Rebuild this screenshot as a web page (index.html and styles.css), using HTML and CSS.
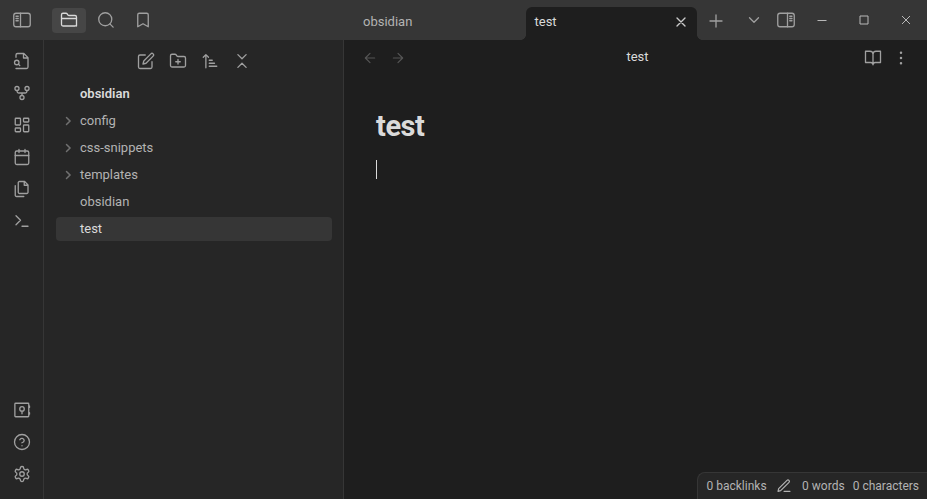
FILE: index.html
```html
<!DOCTYPE html>
<html lang="en">
<head>
<meta charset="utf-8">
<title>test - obsidian</title>
<link rel="stylesheet" href="styles.css">
</head>
<body>
<div class="app">
  <header class="titlebar">
    <div class="toggle-left"><svg class="icon" viewBox="0 0 24 24"><rect x="1" y="3" width="22" height="18" rx="3"/><path d="M10 3v18M4 7h3M4 10h3M4 13h3"/></svg></div>
    <div class="side-tabs">
      <div class="side-tab active"><svg class="icon" viewBox="0 0 24 24"><path d="M22 20V8a2 2 0 0 0-2-2h-7.900a2 2 0 0 1-1.700-.9l-.8-1.200A2 2 0 0 0 7.900 3H4a2 2 0 0 0-2 2v13a2 2 0 0 0 2 2h16a2 2 0 0 0 2-2M2 10h20"/></svg></div>
      <div class="side-tab"><svg class="icon" viewBox="0 0 24 24"><circle cx="11" cy="11" r="8.700"/><path d="m21.500 21.500-4.300-4.300"/></svg></div>
      <div class="side-tab"><svg class="icon" viewBox="0 0 24 24"><path d="m19 21-7-4-7 4V5a2 2 0 0 1 2-2h10a2 2 0 0 1 2 2v16z"/></svg></div>
    </div>
    <div class="tab"><span>obsidian</span></div>
    <div class="tab current"><span>test</span><svg class="icon close" viewBox="0 0 24 24"><path d="M18 6 6 18M6 6l12 12"/></svg></div>
    <div class="new-tab"><svg class="icon" viewBox="0 0 24 24"><path d="M12 4v16M4 12h16"/></svg></div>
    <div class="tab-list"><svg class="icon" viewBox="0 0 24 24"><path d="m6 9 6 6 6-6"/></svg></div>
    <div class="toggle-right"><svg class="icon" viewBox="0 0 24 24"><rect x="1" y="3" width="22" height="18" rx="3"/><path d="M14 3v18M17 7h3M17 10h3M17 13h3"/></svg></div>
    <div class="window-buttons">
      <svg viewBox="0 0 10 10"><path d="M.5 5.500h9"/></svg>
      <svg viewBox="0 0 10 10"><path d="M1 1h8v8H1z"/></svg>
      <svg viewBox="0 0 10 10"><path d="m1 1 8 8M9 1 1 9"/></svg>
    </div>
  </header>

  <div class="workspace">
    <nav class="ribbon">
      <svg class="icon" viewBox="0 0 24 24"><path d="M4 22h14a2 2 0 0 0 2-2V7.500L14.500 2H6a2 2 0 0 0-2 2v3M14 2v6h6"/><circle cx="5" cy="14" r="3"/><path d="m9 18-1.500-1.500"/></svg>
      <svg class="icon" viewBox="0 0 24 24"><circle cx="12" cy="18" r="2.700"/><circle cx="5.300" cy="6" r="2.700"/><circle cx="18.700" cy="6" r="2.700"/><path d="M18.500 9v1a2 2 0 0 1-2 2h-9a2 2 0 0 1-2-2V9M12 12v3"/></svg>
      <svg class="icon" viewBox="0 0 24 24"><rect x="3" y="3" width="7" height="9" rx="1"/><rect x="14" y="3" width="7" height="5" rx="1"/><rect x="14" y="12" width="7" height="9" rx="1"/><rect x="3" y="16" width="7" height="5" rx="1"/></svg>
      <svg class="icon" viewBox="0 0 24 24"><rect x="3" y="4" width="18" height="18" rx="2"/><path d="M16 2v4M8 2v4M3 10h18"/></svg>
      <svg class="icon" viewBox="0 0 24 24"><path d="M15.500 2H8.600c-.4 0-.8.2-1.100.5-.3.3-.5.7-.5 1.100v12.800c0 .4.2.8.5 1.100.3.3.7.5 1.100.5h9.800c.4 0 .8-.2 1.100-.5.3-.3.5-.7.5-1.100V6.500L15.500 2zM3 7.600v12.800c0 .4.2.8.5 1.100.3.3.7.5 1.100.5h9.800M15 2v5h5"/></svg>
      <svg class="icon" viewBox="0 0 24 24"><path d="m4 17 6-6-6-6M12 19h8"/></svg>
      <div class="spacer"></div>
      <svg class="icon" viewBox="0 0 24 24"><rect x="2.500" y="3" width="18.500" height="18" rx="1"/><circle cx="12" cy="10.500" r="3"/><path d="M12 13.500V17M22 6.500v2M22 15.500v2"/></svg>
      <svg class="icon" viewBox="0 0 24 24"><circle cx="12" cy="12" r="10"/><path d="M9.100 9a3 3 0 0 1 5.800 1c0 2-3 3-3 3M12 17h.01"/></svg>
      <svg class="icon" viewBox="0 0 24 24"><path d="M12.220 2h-.44a2 2 0 0 0-2 2v.18a2 2 0 0 1-1 1.730l-.43.25a2 2 0 0 1-2 0l-.15-.08a2 2 0 0 0-2.730.73l-.22.38a2 2 0 0 0 .73 2.730l.15.1a2 2 0 0 1 1 1.720v.51a2 2 0 0 1-1 1.740l-.15.09a2 2 0 0 0-.73 2.730l.22.38a2 2 0 0 0 2.730.73l.15-.08a2 2 0 0 1 2 0l.43.25a2 2 0 0 1 1 1.730V20a2 2 0 0 0 2 2h.44a2 2 0 0 0 2-2v-.18a2 2 0 0 1 1-1.730l.43-.25a2 2 0 0 1 2 0l.15.08a2 2 0 0 0 2.730-.73l.22-.39a2 2 0 0 0-.73-2.730l-.15-.08a2 2 0 0 1-1-1.740v-.5a2 2 0 0 1 1-1.740l.15-.09a2 2 0 0 0 .73-2.730l-.22-.38a2 2 0 0 0-2.730-.73l-.15.08a2 2 0 0 1-2 0l-.43-.25a2 2 0 0 1-1-1.730V4a2 2 0 0 0-2-2z"/><circle cx="12" cy="12" r="3"/></svg>
    </nav>

    <aside class="sidebar">
      <div class="file-actions">
        <svg class="icon" viewBox="0 0 24 24"><path d="M11 4H4a2 2 0 0 0-2 2v14a2 2 0 0 0 2 2h14a2 2 0 0 0 2-2v-7"/><path d="M18.500 2.500a2.120 2.120 0 0 1 3 3L12 15l-4 1 1-4 9.500-9.500z"/></svg>
        <svg class="icon" viewBox="0 0 24 24"><path d="M4 20h16a2 2 0 0 0 2-2V8a2 2 0 0 0-2-2h-7.930a2 2 0 0 1-1.660-.9l-.82-1.200A2 2 0 0 0 7.930 3H4a2 2 0 0 0-2 2v13c0 1.100.9 2 2 2ZM12 10v6M9 13h6"/></svg>
        <svg class="icon" viewBox="0 0 24 24"><path d="M11 11h4M11 15h7M11 19h10M10 7 6.500 3.500 3 7M6.500 4v17"/></svg>
        <svg class="icon" viewBox="0 0 24 24"><path d="m6.500 20.500 5.500-5.500 5.500 5.500M6.500 3.500 12 9l5.500-5.500"/></svg>
      </div>
      <div class="tree">
        <div class="row vault"><i></i><span>obsidian</span></div>
        <div class="row"><svg class="chevron" viewBox="0 0 24 24"><path d="m9 5 7 7-7 7"/></svg><span>config</span></div>
        <div class="row"><svg class="chevron" viewBox="0 0 24 24"><path d="m9 5 7 7-7 7"/></svg><span>css-snippets</span></div>
        <div class="row"><svg class="chevron" viewBox="0 0 24 24"><path d="m9 5 7 7-7 7"/></svg><span>templates</span></div>
        <div class="row"><i></i><span>obsidian</span></div>
        <div class="row selected"><i></i><span>test</span></div>
      </div>
    </aside>

    <main class="pane">
      <div class="view-header">
        <div class="view-nav">
          <svg class="icon" viewBox="0 0 24 24"><path d="m12 19-7-7 7-7M19 12H5"/></svg>
          <svg class="icon" viewBox="0 0 24 24"><path d="M5 12h14M12 5l7 7-7 7"/></svg>
        </div>
        <div class="view-title">test</div>
        <div class="view-actions">
          <svg class="icon" viewBox="0 0 24 24"><path d="M2 3h6a4 4 0 0 1 4 4v14a3 3 0 0 0-3-3H2zM22 3h-6a4 4 0 0 0-4 4v14a3 3 0 0 1 3-3h7z"/></svg>
          <svg class="icon" viewBox="0 0 24 24"><circle cx="12" cy="12" r=".8"/><circle cx="12" cy="5" r=".8"/><circle cx="12" cy="19" r=".8"/></svg>
        </div>
      </div>
      <article class="editor"><h1>test</h1><div class="caret"></div></article>
      <footer class="status">
        <span>0 backlinks</span>
        <svg class="icon" viewBox="0 0 24 24"><path d="M12 20h9M16.500 3.500a2.120 2.120 0 0 1 3 3L7 19l-4 1 1-4Z"/></svg>
        <span class="words">0 words</span>
        <span>0 characters</span>
      </footer>
    </main>
  </div>
</div>
</body>
</html>
```
FILE: styles.css
```css
* { box-sizing: border-box; }
body {
  margin: 0;
  background: #1e1e1e;
  color: #b3b3b3;
  font: 13px/17px Roboto, sans-serif;
}
svg { display: block; flex: none; fill: none; stroke: currentColor; }
.icon {
  width: 18px;
  height: 18px;
  color: #a0a0a0;
  stroke-width: 1.75;
  stroke-linecap: round;
  stroke-linejoin: round;
}
.app { height: 499px; display: flex; flex-direction: column; overflow: hidden; }

.titlebar { height: 40px; flex: none; display: flex; background: #363636; }
.titlebar > div { flex: none; display: flex; align-items: center; }
.toggle-left { width: 52px; padding-left: 13px; }
.titlebar .side-tabs { width: 303px; gap: 3px; }
.side-tab {
  width: 34px;
  height: 25px;
  border-radius: 4px;
  display: flex;
  align-items: center;
  justify-content: center;
}
.side-tab.active { background: #464646; }
.side-tab.active .icon { color: #dadada; }
.titlebar .tab { width: 171px; padding: 3px 8px 0; }
.titlebar .tab.current {
  position: relative;
  margin-top: 7px;
  padding: 0 8px 4px 8.500px;
  justify-content: space-between;
  background: #1e1e1e;
  color: #dadada;
  border-radius: 6px 6px 0 0;
}
.tab.current::before, .tab.current::after {
  content: "";
  position: absolute;
  bottom: 0;
  width: 5px;
  height: 5px;
}
.tab.current::before { right: 100%; background: radial-gradient(circle at 0 0, #363636 4.500px, #1e1e1e 5px); }
.tab.current::after { left: 100%; background: radial-gradient(circle at 100% 0, #363636 4.500px, #1e1e1e 5px); }
.icon.close { width: 16px; height: 16px; color: #cacaca; stroke-width: 2; }
.titlebar .new-tab { width: 48px; padding: 2px 0 0 10px; }
.tab-list { width: 32px; }
.toggle-right { width: 40px; }
.window-buttons { gap: 32px; }
.window-buttons svg { width: 10px; height: 10px; color: #b8b8b8; }

.workspace { flex: 1; min-height: 0; display: flex; }
.ribbon {
  width: 44px;
  flex: none;
  padding: 12px 12px 16px 13px;
  display: flex;
  flex-direction: column;
  gap: 14px;
  background: #262626;
  border-right: 1px solid #363636;
}
.spacer { flex: 1; }
.sidebar {
  width: 300px;
  flex: none;
  padding: 12px 11px 0 12px;
  background: #262626;
  border-right: 1px solid #363636;
}
.file-actions { display: flex; justify-content: center; gap: 14px; }
.tree { margin-top: 12px; display: flex; flex-direction: column; gap: 3px; }
.row { height: 24px; display: flex; align-items: center; border-radius: 4px; }
.row span { padding-bottom: 2px; }
.row i { width: 24px; }
.chevron { width: 12px; height: 12px; margin: 0 6px; stroke: #707070; stroke-width: 3; stroke-linecap: round; }
.vault { color: #dadada; font-weight: 600; }
.selected { background: #363636; color: #dadada; }

.pane { position: relative; flex: 1; min-width: 0; }
.view-header { height: 35px; padding: 0 17px; display: flex; align-items: center; }
.view-nav, .view-actions { width: 120px; display: flex; gap: 10px; }
.view-nav { padding-left: 1px; gap: 12px; }
.view-nav .icon { width: 16px; height: 16px; color: #555; }
.view-actions { justify-content: flex-end; }
.view-title { flex: 1; padding: 0 0 2px 4px; text-align: center; color: #dadada; }
.editor { padding: 34px 32px 0; }
.editor h1 { margin: 0; color: #dadada; font-size: 29px; line-height: 35px; font-weight: 700; letter-spacing: -0.435px; }
.caret { width: 1px; height: 19px; margin-top: 16px; background: #dadada; }
.status {
  position: absolute;
  right: 0;
  bottom: 0;
  width: 230px;
  height: 27px;
  padding: 0 8px 0 8.500px;
  display: flex;
  align-items: center;
  background: #262626;
  border: solid #363636;
  border-width: 1px 0 0 1px;
  border-radius: 8px 0 0 0;
  font-size: 12px;
  white-space: nowrap;
}
.status .icon { width: 16px; height: 16px; margin: 0 10px 0 9.500px; color: #b3b3b3; }
.words { margin-right: auto; }
```
